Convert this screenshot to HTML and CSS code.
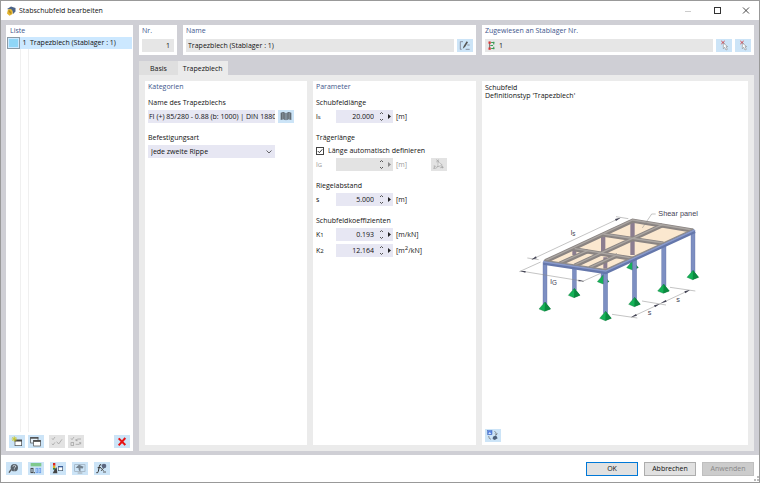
FILE: index.html
```html
<!DOCTYPE html>
<html lang="de">
<head>
  <meta charset="UTF-8">
  <meta name="viewport" content="width=device-width, initial-scale=1.0">
  <title>Stabschubfeld bearbeiten</title>
  <link rel="stylesheet" href="styles.css">
</head>
<body>
  <div class="window">
    <header class="titlebar">
      <svg class="app-icon" viewBox="0 0 10 10">
        <path d="M1 3 L5 0.5 L9.5 2 L9.5 5.5 L7 8 L6 4 L3 3.5 Z" fill="#4c6488"/>
        <path d="M2 3.5 L5 3 L6.5 5 L6.5 8 L3.5 9.7 L1 7.5 Z" fill="#e3b32c"/>
        <path d="M2.5 5 H4 V7 H5.5" stroke="#8b6b14" stroke-width="0.7" fill="none"/>
      </svg>
      <h1>Stabschubfeld bearbeiten</h1>
      <div class="window-controls">
        <button class="win-btn" aria-label="Minimieren" disabled><svg viewBox="0 0 8 8"><path d="M1 4.5 H7" stroke="#ccc"/></svg></button>
        <button class="win-btn" aria-label="Maximieren"><svg viewBox="0 0 8 8"><rect x="1.5" y="0.5" width="6" height="6" fill="none" stroke="#333"/></svg></button>
        <button class="win-btn" aria-label="Schließen"><svg viewBox="0 0 8 8"><path d="M1 0.5 L7 6.5 M7 0.5 L1 6.5" stroke="#333" stroke-width="0.9"/></svg></button>
      </div>
    </header>

    <main class="workspace">
      <section class="panel list-panel">
        <h2>Liste</h2>
        <div class="list">
          <div class="list-row">
            <span class="swatch"></span>
            <span class="list-nr">1</span>
            <span class="list-name">Trapezblech (Stablager : 1)</span>
          </div>
          <div class="list-empty"></div>
        </div>
        <div class="list-tools">
          <button class="icon-btn" aria-label="Neu">
            <svg viewBox="0 0 48 39"><rect x="18" y="15" width="20" height="17" fill="#fff" stroke="#444" stroke-width="2"/><path d="M17 17 H39" stroke="#444" stroke-width="5"/><path d="M16 4 V20 M8 12 H24 M10 6 L22 18 M22 6 L10 18" stroke="#c9c520" stroke-width="2.5"/></svg>
          </button>
          <button class="icon-btn" aria-label="Kopieren">
            <svg viewBox="0 0 48 39"><rect x="8" y="7" width="22" height="17" fill="#e8f2fa" stroke="#444" stroke-width="2"/><path d="M7 9 H31" stroke="#444" stroke-width="4"/><rect x="17" y="16" width="20" height="17" fill="#fff" stroke="#444" stroke-width="2"/><path d="M16 18 H38" stroke="#444" stroke-width="5"/></svg>
          </button>
          <button class="icon-btn tools-gap" aria-label="Alle auswählen" disabled>
            <svg viewBox="0 0 48 39"><path d="M9 10 L12 14 L18 6 M9 26 L12 30 L18 22" class="gray-line"/><path d="M23 20 L29 27 L39 13" class="gray-line"/></svg>
          </button>
          <button class="icon-btn" aria-label="Auswahl umkehren" disabled>
            <svg viewBox="0 0 48 39"><path d="M9 10 L12 14 L18 6" class="gray-line"/><rect x="9" y="23" width="8" height="8" class="gray-line"/><path d="M24 17 L28 12 L39 12 M24 12 V17 H29 M38 28 V23 H33 M38 23 L34 28 H23" class="gray-line"/></svg>
          </button>
          <button class="icon-btn tools-end" aria-label="Löschen">
            <svg viewBox="0 0 48 39"><path d="M14 10 L34 30 M34 9 L14 31" stroke="#e81212" stroke-width="6"/></svg>
          </button>
        </div>
      </section>

      <div class="content">
        <div class="head-row">
          <section class="panel">
            <h2><label for="nr">Nr.</label></h2>
            <input class="field readonly align-right" type="text" id="nr" value="1" readonly>
          </section>
          <section class="panel">
            <h2><label for="name">Name</label></h2>
            <div class="field-row">
              <input class="field readonly" type="text" id="name" value="Trapezblech (Stablager : 1)" readonly>
              <button class="icon-btn" aria-label="Name bearbeiten">
                <svg viewBox="0 0 48 39"><path d="M18 8 H10 V31 H14 M26 31 H38" stroke="#667" stroke-width="2" fill="none"/><path d="M17 29 L20 21 L29 7 L33 10 L24 24 Z" fill="#555"/><path d="M31 18 H38" stroke="#667" stroke-width="2"/></svg>
              </button>
            </div>
          </section>
          <section class="panel">
            <h2><label for="assigned">Zugewiesen an Stablager Nr.</label></h2>
            <div class="field-row">
              <div class="field readonly assigned">
                <svg class="support-icon" viewBox="0 0 18 24"><path d="M4 2 V22" stroke="#444" stroke-width="2"/><path d="M1 1 H7 V7 H1 Z M1 17 H7 V23 H1 Z" fill="#d33"/><path d="M8 4 H17 M6 12 H13 M8 20 H17 M15 2 V9 M15 15 V22" stroke="#3a9c55" stroke-width="3"/></svg>
                <input type="text" id="assigned" value="1" readonly>
              </div>
              <button class="icon-btn" aria-label="Einzeln auswählen">
                <svg viewBox="0 0 48 39"><path d="M16 6 L26 15 M26 6 L16 15" stroke="#d4444c" stroke-width="3"/><path d="M22 12 V29 L26 25 L30 33 L34 31 L30 23 H35 Z" fill="#fff" stroke="#777" stroke-width="1.5"/></svg>
              </button>
              <button class="icon-btn" aria-label="Mehrfach auswählen">
                <svg viewBox="0 0 48 39"><path d="M16 6 L26 15 M26 6 L16 15" stroke="#d4444c" stroke-width="3"/><path d="M22 12 V29 L26 25 L30 33 L34 31 L30 23 H35 Z" fill="#fff" stroke="#777" stroke-width="1.5"/></svg>
              </button>
            </div>
          </section>
        </div>

        <nav class="tabs">
          <button class="tab">Basis</button>
          <button class="tab active">Trapezblech</button>
        </nav>

        <div class="tab-page">
          <section class="panel">
            <h2>Kategorien</h2>
            <div class="group">
              <label class="caption" for="sheet">Name des Trapezblechs</label>
              <div class="field-row">
                <input class="field category-field" type="text" id="sheet" value="FI (+) 85/280 - 0.88 (b: 1000) | DIN 1880">
                <button class="icon-btn" aria-label="Bibliothek">
                  <svg viewBox="0 0 48 39"><path d="M8 8 L16 6 L23 9 V31 L16 28 L8 30 Z M25 9 L32 6 L40 8 V30 L32 28 L25 31 Z" fill="#5a636c"/><path d="M13 9 V27 M18 9 V27 M30 9 V27 M35 9 V27" stroke="#b3bcc3" stroke-width="1.5"/></svg>
                </button>
              </div>
            </div>
            <div class="group">
              <label class="caption" for="fixing">Befestigungsart</label>
              <div class="select-wrap">
                <select class="field" id="fixing">
                  <option>Jede zweite Rippe</option>
                </select>
                <svg class="chevron" viewBox="0 0 6 4"><path d="M0.5 0.5 L3 3 L5.5 0.5" fill="none" stroke="#444" stroke-width="0.8"/></svg>
              </div>
            </div>
          </section>

          <section class="panel">
            <h2>Parameter</h2>
            <div class="group">
              <span class="caption">Schubfeldlänge</span>
              <div class="param">
                <label for="ls">l<sub>s</sub></label>
                <div class="spin">
                  <input type="text" id="ls" value="20.000">
                  <svg viewBox="0 0 18 13"><path d="M5 4 L6.5 2.5 L8 4 M5 9 L6.5 10.5 L8 9" class="spin-line"/><path d="M13 4 L16 6.5 L13 9 Z" fill="#222"/></svg>
                </div>
                <span>[m]</span>
              </div>
            </div>
            <div class="group">
              <span class="caption">Trägerlänge</span>
              <label class="check">
                <span class="box">
                  <input type="checkbox" checked>
                  <svg viewBox="0 0 8 8"><path d="M1.8 4 L3.4 5.7 L6.3 2.3" fill="none" stroke="#222" stroke-width="0.9"/></svg>
                </span>
                Länge automatisch definieren
              </label>
              <div class="param disabled">
                <label for="lg">l<sub>G</sub></label>
                <div class="spin">
                  <input type="text" id="lg" disabled>
                  <svg viewBox="0 0 18 13"><path d="M5 4 L6.5 2.5 L8 4 M5 9 L6.5 10.5 L8 9" class="spin-line"/><path d="M13 4 L16 6.5 L13 9 Z" fill="#888"/></svg>
                </div>
                <span>[m]</span>
                <button class="icon-btn" aria-label="Länge wählen" disabled>
                  <svg viewBox="0 0 48 39"><path d="M16 5 L24 12 M24 5 L16 12 M8 24 H13 L8 31 H14 M16 31 L20 24 M34 24 V31 M30 28 H38" stroke="#999" stroke-width="2" fill="none"/><path d="M21 11 V27 L25 23 L29 30 L32 28 L29 21 H34 Z" fill="#eee" stroke="#999" stroke-width="1.5"/></svg>
                </button>
              </div>
            </div>
            <div class="group">
              <span class="caption">Riegelabstand</span>
              <div class="param">
                <label for="s">s</label>
                <div class="spin">
                  <input type="text" id="s" value="5.000">
                  <svg viewBox="0 0 18 13"><path d="M5 4 L6.5 2.5 L8 4 M5 9 L6.5 10.5 L8 9" class="spin-line"/><path d="M13 4 L16 6.5 L13 9 Z" fill="#222"/></svg>
                </div>
                <span>[m]</span>
              </div>
            </div>
            <div class="group">
              <span class="caption">Schubfeldkoeffizienten</span>
              <div class="param">
                <label for="k1">K<sub>1</sub></label>
                <div class="spin">
                  <input type="text" id="k1" value="0.193">
                  <svg viewBox="0 0 18 13"><path d="M5 4 L6.5 2.5 L8 4 M5 9 L6.5 10.5 L8 9" class="spin-line"/><path d="M13 4 L16 6.5 L13 9 Z" fill="#222"/></svg>
                </div>
                <span>[m/kN]</span>
              </div>
              <div class="param">
                <label for="k2">K<sub>2</sub></label>
                <div class="spin">
                  <input type="text" id="k2" value="12.164">
                  <svg viewBox="0 0 18 13"><path d="M5 4 L6.5 2.5 L8 4 M5 9 L6.5 10.5 L8 9" class="spin-line"/><path d="M13 4 L16 6.5 L13 9 Z" fill="#222"/></svg>
                </div>
                <span>[m<sup>2</sup>/kN]</span>
              </div>
            </div>
          </section>

          <section class="panel preview">
            <p>Schubfeld<br>Definitionstyp 'Trapezblech'</p>
            <svg class="drawing" viewBox="0 0 630 390">
              <defs>
                <g id="support">
                  <path d="M0 -9 L17 12 L-1 19 L-18 12 Z" fill="#14b257"/>
                  <path d="M0 -9 L17 12 L-1 19 Z" fill="#0b8a40"/>
                  <path d="M0 -9 L17 12 L-1 19 L-18 12 Z" fill="none" stroke="#0b6b34"/>
                </g>
              </defs>
              <!-- rear columns -->
              <g fill="#7d8fc2" stroke="#5a6b9e" stroke-width="1">
                <rect x="273" y="100" width="13" height="134"/>
                <rect x="361" y="64" width="13" height="130"/>
                <rect x="187" y="150" width="12" height="120"/>
              </g>
              <use href="#support" x="280" y="233"/>
              <use href="#support" x="368" y="191"/>
              <use href="#support" x="193" y="274"/>
              <!-- shear panel -->
              <path d="M106 184 L368 62 L549 92 L287 213 Z" fill="#fbe8cf"/>
              <g fill="#8b7d90">
                <path d="M273 110 H286 V168 H273 Z M361 68 H374 V112 H361 Z M361 118 H374 V165 H361 Z M187 150 H199 V165 H187 Z M280 172 H292 V206 H280 Z"/>
              </g>
              <!-- girders and purlins -->
              <g stroke="#8a8482" stroke-width="13" fill="none">
                <path d="M106 184 L368 62 L549 92"/>
                <path d="M194 148 L372 177 M280 104 L460 131 M194 197 L457 76"/>
                <path d="M149 191 L234 153 M238 205 L323 166"/>
              </g>
              <g stroke="#aba6a2" stroke-width="4" fill="none">
                <path d="M106 182 L368 60 L549 90"/>
                <path d="M194 146 L372 175 M280 102 L460 129 M194 195 L457 74"/>
                <path d="M149 189 L234 151 M238 203 L323 164"/>
              </g>
              <!-- front columns -->
              <g fill="#7d8fc2" stroke="#5a6b9e" stroke-width="1">
                <rect x="99" y="188" width="12" height="126"/>
                <rect x="280" y="214" width="13" height="126"/>
                <rect x="367" y="178" width="13" height="122"/>
                <rect x="455" y="134" width="13" height="126"/>
                <rect x="543" y="92" width="12" height="126"/>
              </g>
              <path d="M100 188 L287 216 L554 93" fill="none" stroke="#6577ab" stroke-width="13"/>
              <path d="M100 185 L287 213 L554 90" fill="none" stroke="#8a9aca" stroke-width="5"/>
              <path d="M102 181 L287 209 L550 87" fill="none" stroke="#8f8c8c" stroke-width="4"/>
              <!-- front supports -->
              <use href="#support" x="105" y="315"/>
              <use href="#support" x="287" y="343"/>
              <use href="#support" x="374" y="301"/>
              <use href="#support" x="461" y="261"/>
              <use href="#support" x="549" y="220"/>
              <!-- dimension lines -->
              <g stroke="#888" stroke-width="1.5" fill="none">
                <path d="M66 178 L330 54 M52 174 L86 179 M318 50 L355 56"/>
                <path d="M32 213 L222 244 M28 215 L92 186 M216 245 L272 220"/>
                <path d="M365 351 L537 271 M306 343 L382 354 M396 303 L468 315 M480 262 L556 273"/>
                <path d="M397 84 L425 42 L437 42"/>
              </g>
              <g fill="#445">
                <path d="M64 179 L78 169 L80 175 Z M332 53 L315 57 L318 63 Z"/>
                <path d="M30 213 L47 213 L46 218 Z M222 244 L206 239 L205 244 Z"/>
                <path d="M363 352 L378 342 L381 347 Z M449 312 L432 316 L435 322 Z M452 310 L467 300 L470 305 Z M540 270 L523 274 L526 280 Z"/>
              </g>
              <g class="drawing-text">
                <text x="445" y="48">Shear panel</text>
                <text x="182" y="106">l<tspan class="drawing-sub" dy="3">s</tspan></text>
                <text x="121" y="252">l<tspan class="drawing-sub" dy="3">G</tspan></text>
                <text x="413" y="346">s</text>
                <text x="499" y="306">s</text>
              </g>
            </svg>
            <button class="icon-btn" aria-label="Ansicht wechseln">
              <svg viewBox="0 0 48 39"><rect x="8" y="5" width="13" height="12" fill="#5b85e0" stroke="#3b62b8" stroke-width="1.5"/><path d="M10 15 L14 9 L19 15 Z" fill="#dbe7ff"/><path d="M28 7 Q34 8 34 17 M30 14 L34 18 L37 13 M11 21 Q11 30 18 31" stroke="#666" stroke-width="2" fill="none"/><path d="M24 23 L33 19 L38 28 L29 33 L23 30 Z" fill="#4d607a"/></svg>
            </button>
          </section>
        </div>
      </div>
    </main>

    <footer class="footer">
      <button class="icon-btn" aria-label="Hilfe">
        <svg viewBox="0 0 48 39"><path d="M9 32 L16 22" stroke="#555" stroke-width="4"/><circle cx="25" cy="17" r="11" fill="#58616a"/><path d="M21 14 Q21 10 26 10 Q30 11 29 15 L25 18 V20 M25 23 V25" stroke="#dde6ee" stroke-width="2.5" fill="none"/></svg>
      </button>
      <button class="icon-btn" aria-label="Einheiten">
        <svg viewBox="0 0 48 39"><rect x="8" y="3" width="32" height="10" fill="#7fc98d"/><g fill="none" stroke-width="2.5"><rect x="9" y="19" width="6" height="13" stroke="#333"/><path d="M19 30 V34" stroke="#333"/><rect x="24" y="19" width="5" height="13" stroke="#6c9de8"/><rect x="33" y="19" width="5" height="13" stroke="#6c9de8"/></g></svg>
      </button>
      <button class="icon-btn" aria-label="Anzeige">
        <svg viewBox="0 0 48 39"><rect x="9" y="3" width="7" height="8" fill="#d22"/><rect x="9" y="11" width="7" height="7" fill="#e0b020"/><rect x="9" y="18" width="7" height="5" fill="#2d8a4c"/><path d="M8 34 L14 22 L20 16 L22 34 Z" fill="#444"/><rect x="25" y="14" width="13" height="12" fill="#fff" stroke="#456" stroke-width="2"/><path d="M24 14 H39" stroke="#3b5f9c" stroke-width="4"/></svg>
      </button>
      <button class="icon-btn" aria-label="Ansicht">
        <svg viewBox="0 0 48 39"><rect x="8" y="8" width="31" height="20" fill="none" stroke="#99a9b6" stroke-width="2"/><path d="M17 33 H31" stroke="#888" stroke-width="2"/><path d="M11 17 L21 8 L35 14 L31 20 L26 18 L25 29 L20 24 V19 Z" fill="#74828f"/></svg>
      </button>
      <button class="icon-btn" aria-label="Formel">
        <svg viewBox="0 0 48 39"><path d="M22 9 Q17 5 16 13 L13 28 Q12 34 7 32 M11 17 H21" stroke="#333" stroke-width="3" fill="none"/><circle cx="30" cy="12" r="7" fill="#5b6680"/><path d="M21 18 L29 27 M29 18 L21 27 M27 30 H36" stroke="#444" stroke-width="2.5"/></svg>
      </button>
      <div class="actions">
        <button class="btn primary">OK</button>
        <button class="btn">Abbrechen</button>
        <button class="btn" disabled>Anwenden</button>
      </div>
      <svg class="grip" viewBox="0 0 6 6"><path d="M4 0 H6 V2 H4 Z M4 3 H6 V5 H4 Z M1 3 H3 V5 H1 Z" fill="#bbb"/></svg>
    </footer>
  </div>
</body>
</html>
```

FILE: styles.css
```css
* {
  box-sizing: border-box;
}

body {
  margin: 0;
  font-family: "Open Sans", "Noto Sans", sans-serif;
  font-size: 7px;
  font-weight: 500;
  line-height: 12px;
  color: #111;
}

h1,
h2,
p {
  margin: 0;
  font-size: 7px;
  font-weight: 500;
}

h2 {
  color: #40568c;
}

button,
input,
select {
  font: inherit;
  color: inherit;
  margin: 0;
}

svg {
  display: block;
}

.window {
  display: flex;
  flex-direction: column;
  min-height: 100vh;
  background: #fff;
  border: 1px solid #999;
}

/* title bar */
.titlebar {
  display: flex;
  align-items: center;
  height: 19px;
  padding: 0 5px;
  gap: 3px;
}

.app-icon {
  width: 10px;
  height: 10px;
}

.window-controls {
  display: flex;
  gap: 13px;
  margin-left: auto;
}

.win-btn {
  width: 16px;
  height: 16px;
  padding: 4px;
  border: none;
  background: none;
}

.win-btn svg {
  width: 8px;
  height: 8px;
}

/* main area */
.workspace {
  flex: 1;
  display: grid;
  grid-template-columns: 127px 1fr;
  gap: 6px;
  padding: 5px 5px 4px;
  background: #cfcfd5;
}

.panel {
  background: #fff;
  padding: 0 3px 3px;
  min-width: 0;
}

.list-panel {
  display: flex;
  flex-direction: column;
  padding: 0 1px 3px;
}

.list-panel h2 {
  padding-left: 3px;
}

.list {
  flex: 1;
  display: flex;
  flex-direction: column;
}

.list-row {
  display: flex;
  align-items: center;
  height: 12px;
  background: #cce8ff;
}

.swatch {
  width: 13px;
  height: 12px;
  background: #8fd6f7;
  border: 1px solid #8a9aa5;
  box-shadow: inset 0 0 0 1px #cce8ff;
}

.list-nr {
  width: 9px;
  text-align: center;
}

.list-name {
  padding-left: 1px;
  white-space: nowrap;
}

.list-empty {
  flex: 1;
  width: 9px;
  margin-left: 13px;
  border: solid #f0f0f0;
  border-width: 0 1px;
}

.list-tools {
  display: flex;
  gap: 3px;
  padding: 3px 2px 0;
}

.tools-gap {
  margin-left: 2px;
}

.tools-end {
  margin-left: auto;
}

.icon-btn {
  flex: none;
  width: 16px;
  height: 13px;
  padding: 0;
  border: none;
  background: #cce4f7;
}

.icon-btn:disabled {
  background: #e3e3e3;
}

.icon-btn svg {
  width: 16px;
  height: 13px;
}

.gray-line {
  fill: none;
  stroke: #999;
  stroke-width: 2;
}

.content {
  display: flex;
  flex-direction: column;
  min-width: 0;
}

.head-row {
  display: grid;
  grid-template-columns: 38px 293fr 272fr;
  gap: 6px;
}

.head-row h2 {
  margin-bottom: 2px;
}

.field {
  display: block;
  width: 100%;
  height: 13px;
  padding: 0 2px;
  border: none;
  border-radius: 0;
  background: #e7e7f3;
}

.readonly {
  background: #e6e6e6;
}

.align-right {
  text-align: right;
  padding-right: 4px;
}

.field-row {
  display: flex;
  gap: 3px;
}

.assigned {
  display: flex;
  align-items: center;
  gap: 3px;
}

.assigned input {
  flex: 1;
  min-width: 0;
  padding: 0;
  border: none;
  background: none;
}

.support-icon {
  width: 9px;
  height: 9px;
}

/* tabs */
.tabs {
  display: flex;
  margin-top: 6px;
}

.tab {
  height: 14px;
  padding: 2px 5px 0;
  line-height: 12px;
  border: none;
  background: #dfdfdf;
}

.tab:first-child {
  padding: 2px 11px 0;
}

.tab.active {
  background: #ebebeb;
}

.tab-page {
  flex: 1;
  display: grid;
  grid-template-columns: 162fr 163fr 266fr;
  gap: 6px;
  padding: 6px;
  background: #ebebeb;
}

.group {
  margin-top: 4px;
}

.group + .group {
  margin-top: 9px;
}

.caption {
  display: block;
  margin-bottom: 1px;
}

.category-field {
  width: 127px;
  padding: 0 0 0 1px;
}

.select-wrap {
  position: relative;
  width: 127px;
}

.select-wrap select {
  appearance: none;
  padding: 0 3px;
}

.chevron {
  position: absolute;
  right: 3px;
  top: 5px;
  width: 6px;
  height: 4px;
}

.param {
  display: grid;
  grid-template-columns: 17px 57px 32px 16px;
  column-gap: 3px;
  align-items: center;
  height: 13px;
}

.param + .param {
  margin-top: 3px;
}

.param sub,
.param sup {
  font-size: 6px;
  line-height: 0;
}

.param sub {
  vertical-align: baseline;
}

.spin {
  display: flex;
  height: 13px;
  background: #e7e7f3;
}

.spin input {
  flex: 1;
  min-width: 0;
  padding: 0 1px;
  border: none;
  background: none;
  text-align: right;
}

.spin svg {
  width: 18px;
  height: 13px;
}

.spin-line {
  fill: none;
  stroke: #555;
  stroke-width: 1;
}

.disabled {
  color: #999;
}

.disabled .spin {
  background: #e3e3e3;
}

.check {
  display: flex;
  align-items: center;
  gap: 4px;
  height: 12px;
  margin-bottom: 1px;
}

.box {
  position: relative;
  width: 8px;
  height: 8px;
}

.box input {
  appearance: none;
  display: block;
  width: 8px;
  height: 8px;
  border: 1px solid #444;
  background: #fff;
}

.box svg {
  position: absolute;
  inset: 0;
  width: 8px;
  height: 8px;
  pointer-events: none;
}

.box input:not(:checked) + svg {
  display: none;
}

/* preview */
.preview {
  display: flex;
  flex-direction: column;
  align-items: flex-start;
}

.preview p {
  line-height: 8px;
  padding-top: 3px;
}

.drawing {
  width: 210px;
  height: 130px;
  margin: auto;
}

.drawing-text {
  font-family: "Liberation Sans", Arial, sans-serif;
  font-size: 22px;
  font-weight: 400;
  fill: #445;
}

.drawing-sub {
  font-size: 19px;
}

/* footer */
.footer {
  display: flex;
  align-items: center;
  gap: 6px;
  height: 27px;
  padding: 0 5px;
  position: relative;
}

.actions {
  display: flex;
  gap: 6px;
  margin-left: auto;
}

.btn {
  width: 52px;
  height: 14px;
  padding: 0;
  line-height: 12px;
  border: 1px solid #adadad;
  background: #e1e1e1;
}

.btn.primary {
  border: 1px solid #0078d7;
}

.btn:disabled {
  color: #888;
  background: #ccc;
  border-color: #bfbfbf;
}

.grip {
  position: absolute;
  right: 0;
  bottom: 0;
  width: 6px;
  height: 6px;
}
```
